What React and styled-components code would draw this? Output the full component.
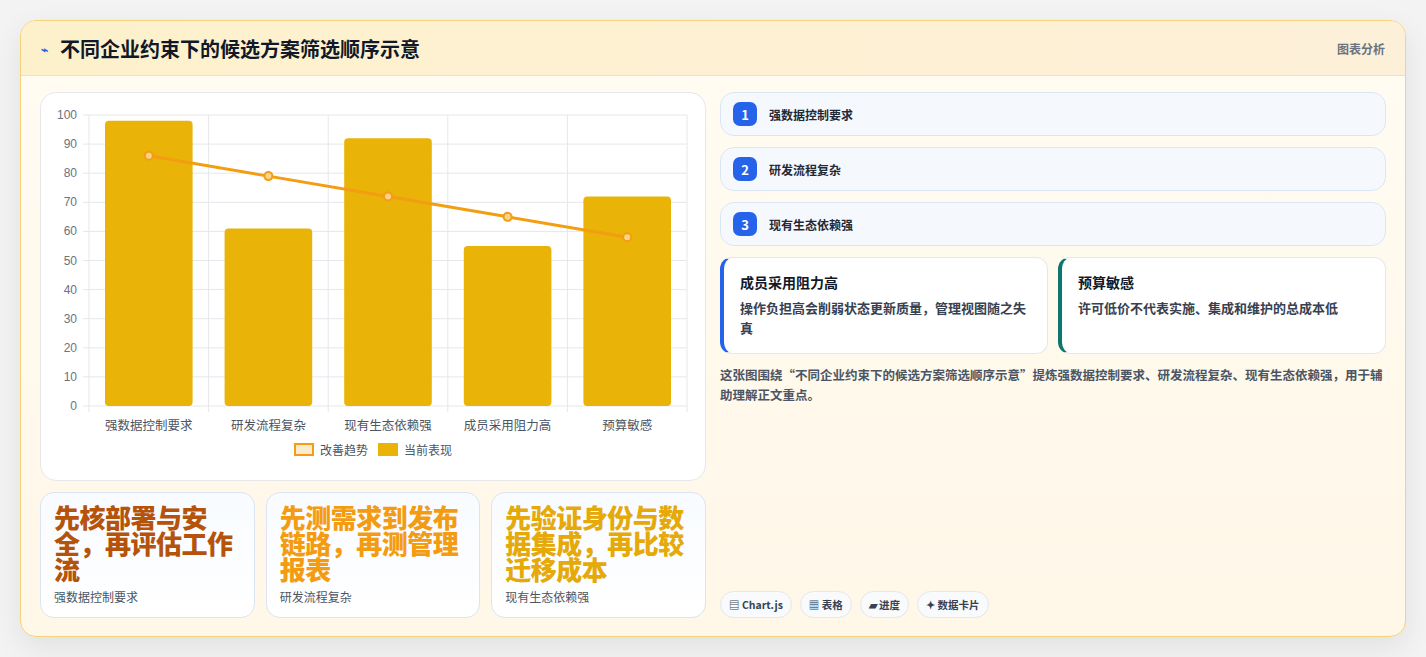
import styled, { createGlobalStyle } from 'styled-components';

const Global = createGlobalStyle`
  body { margin: 0; background: #f3f3f3; font-family: "Noto Sans CJK SC", "Noto Sans", sans-serif; }
`;

const Page = styled.div`
  padding: 20px 20px 20px 20px;
  height: 657px;
  box-sizing: border-box;
`;

const Card = styled.div`
  width: 1386px;
  height: 617px;
  box-sizing: border-box;
  border: 1px solid #f6d27a;
  border-radius: 16px;
  background: linear-gradient(180deg, #fffcf2, #fff7e8);
  box-shadow: 0 10px 30px rgba(0,0,0,0.08);
  overflow: hidden;
  display: flex;
  flex-direction: column;
`;

const Header = styled.div`
  height: 54px;
  flex: none;
  display: flex;
  align-items: center;
  justify-content: space-between;
  padding: 0 20px;
  background: linear-gradient(90deg, #fdf1cc, #fdf0d9);
  border-bottom: 1px solid #f3e2b8;
`;

const Title = styled.h1`
  margin: 0;
  font-size: 20px;
  font-weight: 700;
  color: #111827;
  display: flex;
  align-items: center;
  gap: 12px;
`;

const Tag = styled.span`
  font-size: 12px;
  font-weight: 700;
  color: #6b7280;
`;

const Body = styled.div`
  flex: 1;
  display: grid;
  grid-template-columns: 666px 666px;
  gap: 14px;
  padding: 16px 19px 18px 19px;
`;

const Col = styled.div`
  display: flex;
  flex-direction: column;
  gap: 11px;
  min-height: 0;
`;

const ChartBox = styled.div`
  height: 389px;
  box-sizing: border-box;
  background: #fff;
  border: 1px solid #e5e7eb;
  border-radius: 16px;
  display: flex;
  flex-direction: column;
  align-items: center;
`;

const Legend = styled.div`
  display: flex;
  gap: 10px;
  font-size: 12px;
  color: #4b5563;
  margin-top: 6px;
`;

const LegendItem = styled.span`
  display: flex;
  align-items: center;
  gap: 6px;
`;

const Swatch = styled.i`
  width: 20px;
  height: 13px;
  box-sizing: border-box;
  background: ${p => p.$fill};
  border: 2px solid ${p => p.$border};
`;

const Stats = styled.div`
  display: grid;
  grid-template-columns: repeat(3, 1fr);
  gap: 11px;
`;

const Stat = styled.div`
  height: 126px;
  box-sizing: border-box;
  background: linear-gradient(180deg, #f8fbff, #fff);
  border: 1px solid #dbe4f0;
  border-radius: 14px;
  padding: 11px 13px;
`;

const StatValue = styled.div`
  font-size: 26px;
  font-weight: 900;
  line-height: 1;
  letter-spacing: -0.5px;
  color: ${p => p.$c};
`;

const StatLabel = styled.div`
  font-size: 12px;
  color: #4b5563;
  margin-top: 6px;
`;

const Step = styled.div`
  height: 44px;
  box-sizing: border-box;
  background: #f5f9fe;
  border: 1px solid #dbe6f3;
  border-radius: 14px;
  display: flex;
  align-items: center;
  gap: 12px;
  padding: 0 12px;
  font-size: 12px;
  font-weight: 700;
  color: #1f2937;
`;

const Num = styled.span`
  width: 24px;
  height: 24px;
  border-radius: 7px;
  background: #2563eb;
  color: #fff;
  display: flex;
  align-items: center;
  justify-content: center;
  font-size: 13px;
  font-weight: 700;
`;

const Notes = styled.div`
  display: grid;
  grid-template-columns: 1fr 1fr;
  gap: 10px;
`;

const Note = styled.div`
  height: 97px;
  box-sizing: border-box;
  background: #fff;
  border: 1px solid #e5e7eb;
  border-left: 4px solid ${p => p.$c};
  border-radius: 12px;
  padding: 14px 16px;
`;

const NoteTitle = styled.div`
  font-size: 14px;
  font-weight: 700;
  color: #111827;
  margin-bottom: 6px;
`;

const NoteText = styled.div`
  font-size: 13px;
  font-weight: 600;
  color: #374151;
  line-height: 1.55;
`;

const Summary = styled.p`
  margin: 0;
  font-size: 12.5px;
  font-weight: 600;
  color: #4b5563;
  line-height: 1.6;
`;

const Chips = styled.div`
  margin-top: auto;
  display: flex;
  gap: 8px;
`;

const Chip = styled.span`
  height: 27px;
  box-sizing: border-box;
  padding: 0 8px;
  border: 1px solid #e5e7eb;
  background: #f8fafc;
  border-radius: 14px;
  display: flex;
  align-items: center;
  gap: 3px;
  font-size: 10.5px;
  font-weight: 700;
  color: #374151;
`;

const cats = ['强数据控制要求', '研发流程复杂', '现有生态依赖强', '成员采用阻力高', '预算敏感'];
const bars = [98, 61, 92, 55, 72];
const line = [86, 79, 72, 65, 58];

function Chart() {
  const x0 = 48, x1 = 646, yTop = 22, yBot = 313;
  const w = (x1 - x0) / 5;
  const y = v => yBot - (v / 100) * (yBot - yTop);
  const ticks = [0, 10, 20, 30, 40, 50, 60, 70, 80, 90, 100];
  const pts = line.map((v, i) => `${x0 + w * i + w / 2},${y(v)}`).join(' ');
  return (
    <svg width="664" height="342" style={{ display: 'block' }}>
      {ticks.map(t => (
        <g key={t}>
          <line x1={x0 - 6} x2={x1} y1={y(t)} y2={y(t)} stroke="#e5e7eb" />
          <text x={x0 - 12} y={y(t) + 4} textAnchor="end" fontSize="12" fill="#6b7280" fontFamily="Liberation Sans, sans-serif">{t}</text>
        </g>
      ))}
      {[0, 1, 2, 3, 4, 5].map(i => (
        <line key={i} x1={x0 + w * i} x2={x0 + w * i} y1={yTop} y2={yBot + 6} stroke="#e5e7eb" />
      ))}
      {bars.map((v, i) => (
        <rect key={i} x={x0 + w * i + 16} width={w - 32} y={y(v)} height={yBot - y(v)} rx="4" fill="#e9b308" />
      ))}
      <polyline points={pts} fill="none" stroke="#f29d12" strokeWidth="3" />
      {line.map((v, i) => (
        <circle key={i} cx={x0 + w * i + w / 2} cy={y(v)} r="4" fill="#fbd38d" stroke="#f29d12" strokeWidth="2" />
      ))}
      {cats.map((c, i) => (
        <text key={c} x={x0 + w * i + w / 2} y={yBot + 24} textAnchor="middle" fontSize="12.5" fill="#4b5563">{c}</text>
      ))}
    </svg>
  );
}

export default function App() {
  return (
    <Page>
      <Global />
      <Card>
        <Header>
          <Title><span style={{ color: '#2563eb', fontSize: 12 }}>⌁</span>不同企业约束下的候选方案筛选顺序示意</Title>
          <Tag>图表分析</Tag>
        </Header>
        <Body>
          <Col>
            <ChartBox>
              <Chart />
              <Legend>
                <LegendItem><Swatch $fill="#fdebd0" $border="#f29d12" />改善趋势</LegendItem>
                <LegendItem><Swatch $fill="#e9b308" $border="#e9b308" />当前表现</LegendItem>
              </Legend>
            </ChartBox>
            <Stats>
              <Stat><StatValue $c="#b5530b">先核部署与安全，再评估工作流</StatValue><StatLabel>强数据控制要求</StatLabel></Stat>
              <Stat><StatValue $c="#f39c12">先测需求到发布链路，再测管理报表</StatValue><StatLabel>研发流程复杂</StatLabel></Stat>
              <Stat><StatValue $c="#e5a90a">先验证身份与数据集成，再比较迁移成本</StatValue><StatLabel>现有生态依赖强</StatLabel></Stat>
            </Stats>
          </Col>
          <Col>
            <Step><Num>1</Num>强数据控制要求</Step>
            <Step><Num>2</Num>研发流程复杂</Step>
            <Step><Num>3</Num>现有生态依赖强</Step>
            <Notes>
              <Note $c="#2563eb"><NoteTitle>成员采用阻力高</NoteTitle><NoteText>操作负担高会削弱状态更新质量，管理视图随之失真</NoteText></Note>
              <Note $c="#0f766e"><NoteTitle>预算敏感</NoteTitle><NoteText>许可低价不代表实施、集成和维护的总成本低</NoteText></Note>
            </Notes>
            <Summary>这张图围绕“不同企业约束下的候选方案筛选顺序示意”提炼强数据控制要求、研发流程复杂、现有生态依赖强，用于辅助理解正文重点。</Summary>
            <Chips>
              <Chip>▤ Chart.js</Chip>
              <Chip>▦ 表格</Chip>
              <Chip>▰ 进度</Chip>
              <Chip>✦ 数据卡片</Chip>
            </Chips>
          </Col>
        </Body>
      </Card>
    </Page>
  );
}
